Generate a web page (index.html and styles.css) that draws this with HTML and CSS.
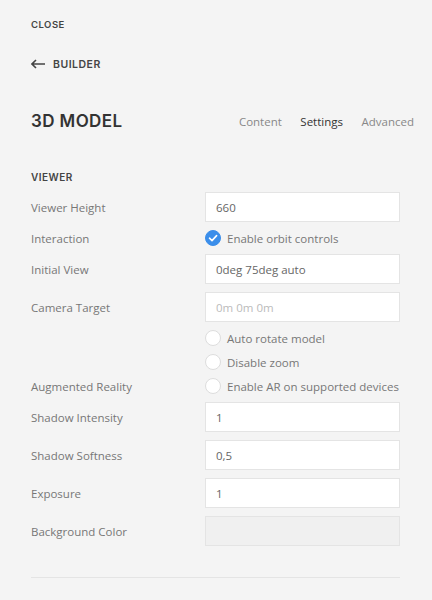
FILE: index.html
```html
<!DOCTYPE html>
<html>
<head>
<meta charset="utf-8">
<link rel="stylesheet" href="styles.css">
</head>
<body>
<div class="panel">
  <div class="close">CLOSE</div>
  <div class="back">
    <svg width="15" height="10" viewBox="0 0 15 10"><path d="M5 1 L1 5 L5 9 M1 5 H14" fill="none" stroke="#444" stroke-width="1.6"/></svg>
    <span>BUILDER</span>
  </div>
  <div class="titlebar">
    <div class="title">3D MODEL</div>
    <div class="tabs">
      <span class="tab">Content</span>
      <span class="tab active">Settings</span>
      <span class="tab">Advanced</span>
    </div>
  </div>
  <div class="section">VIEWER</div>
  <div class="form">
    <div class="label">Viewer Height</div>
    <div class="input">660</div>
    <div class="label">Interaction</div>
    <div class="check"><span class="box checked"><svg width="16" height="16" viewBox="0 0 16 16"><path d="M4.5 8.2 L7 10.6 L11.6 5.6" fill="none" stroke="#fff" stroke-width="1.6" stroke-linecap="round" stroke-linejoin="round"/></svg></span>Enable orbit controls</div>
    <div class="label">Initial View</div>
    <div class="input">0deg 75deg auto</div>
    <div class="label">Camera Target</div>
    <div class="input placeholder">0m 0m 0m</div>
    <div class="label"></div>
    <div class="check"><span class="box"></span>Auto rotate model</div>
    <div class="label"></div>
    <div class="check"><span class="box"></span>Disable zoom</div>
    <div class="label">Augmented Reality</div>
    <div class="check"><span class="box"></span>Enable AR on supported devices</div>
    <div class="label">Shadow Intensity</div>
    <div class="input">1</div>
    <div class="label">Shadow Softness</div>
    <div class="input">0,5</div>
    <div class="label">Exposure</div>
    <div class="input">1</div>
    <div class="label">Background Color</div>
    <div class="input color"></div>
  </div>
  <div class="divider"></div>
</div>
</body>
</html>
```
FILE: styles.css
```css
html, body {
  margin: 0;
  padding: 0;
  background: #f4f4f4;
}
body {
  font-family: "Open Sans", "Liberation Sans", sans-serif;
  color: #777;
}
.panel {
  padding: 18px 32px 0 31px;
}
.close {
  font-family: Inter, "Liberation Sans", sans-serif;
  font-weight: 600;
  font-size: 9.5px;
  color: #444;
  line-height: 12px;
  height: 12px;
  letter-spacing: 0.5px;
  padding-top: 1px;
}
.back {
  display: flex;
  align-items: center;
  gap: 7px;
  margin-top: 27px;
  height: 12px;
  font-family: Inter, "Liberation Sans", sans-serif;
  font-weight: 600;
  font-size: 10.5px;
  color: #444;
  letter-spacing: 0.5px;
}
.titlebar {
  display: flex;
  align-items: center;
  justify-content: space-between;
  margin-top: 41px;
  height: 20px;
}
.title {
  font-family: Inter, "Liberation Sans", sans-serif;
  font-weight: 600;
  font-size: 17px;
  color: #333;
  letter-spacing: 0.4px;
}
.tabs {
  display: flex;
  gap: 18.5px;
  margin-right: -14px;
  font-size: 11.5px;
}
.tab {
  color: #888;
}
.tab.active {
  color: #333;
}
.section {
  margin-top: 40px;
  font-family: Inter, "Liberation Sans", sans-serif;
  font-weight: 600;
  font-size: 10px;
  color: #444;
  line-height: 12px;
  letter-spacing: 0.5px;
}
.form {
  margin-top: 9px;
  display: grid;
  grid-template-columns: 174px 1fr;
  row-gap: 8px;
  align-items: center;
  font-size: 11.5px;
}
.label {
  color: #777;
}
.input {
  height: 30px;
  box-sizing: border-box;
  background: #fff;
  border: 1px solid #e4e4e4;
  padding: 0 10px;
  display: flex;
  align-items: center;
  color: #666;
}
.input.placeholder {
  color: #bbb;
}
.input.color {
  background: #f0f0f0;
}
.check {
  display: flex;
  align-items: center;
  gap: 6px;
  height: 16px;
  color: #777;
}
.box {
  width: 16px;
  height: 16px;
  box-sizing: border-box;
  border-radius: 50%;
  border: 1px solid #ddd;
  background: #fff;
  display: flex;
}
.box.checked {
  background: #3b8eea;
  border-color: #3b8eea;
}
.box svg {
  margin: -1px;
}
.divider {
  margin-top: 31px;
  height: 1px;
  background: #e4e4e4;
}
```
